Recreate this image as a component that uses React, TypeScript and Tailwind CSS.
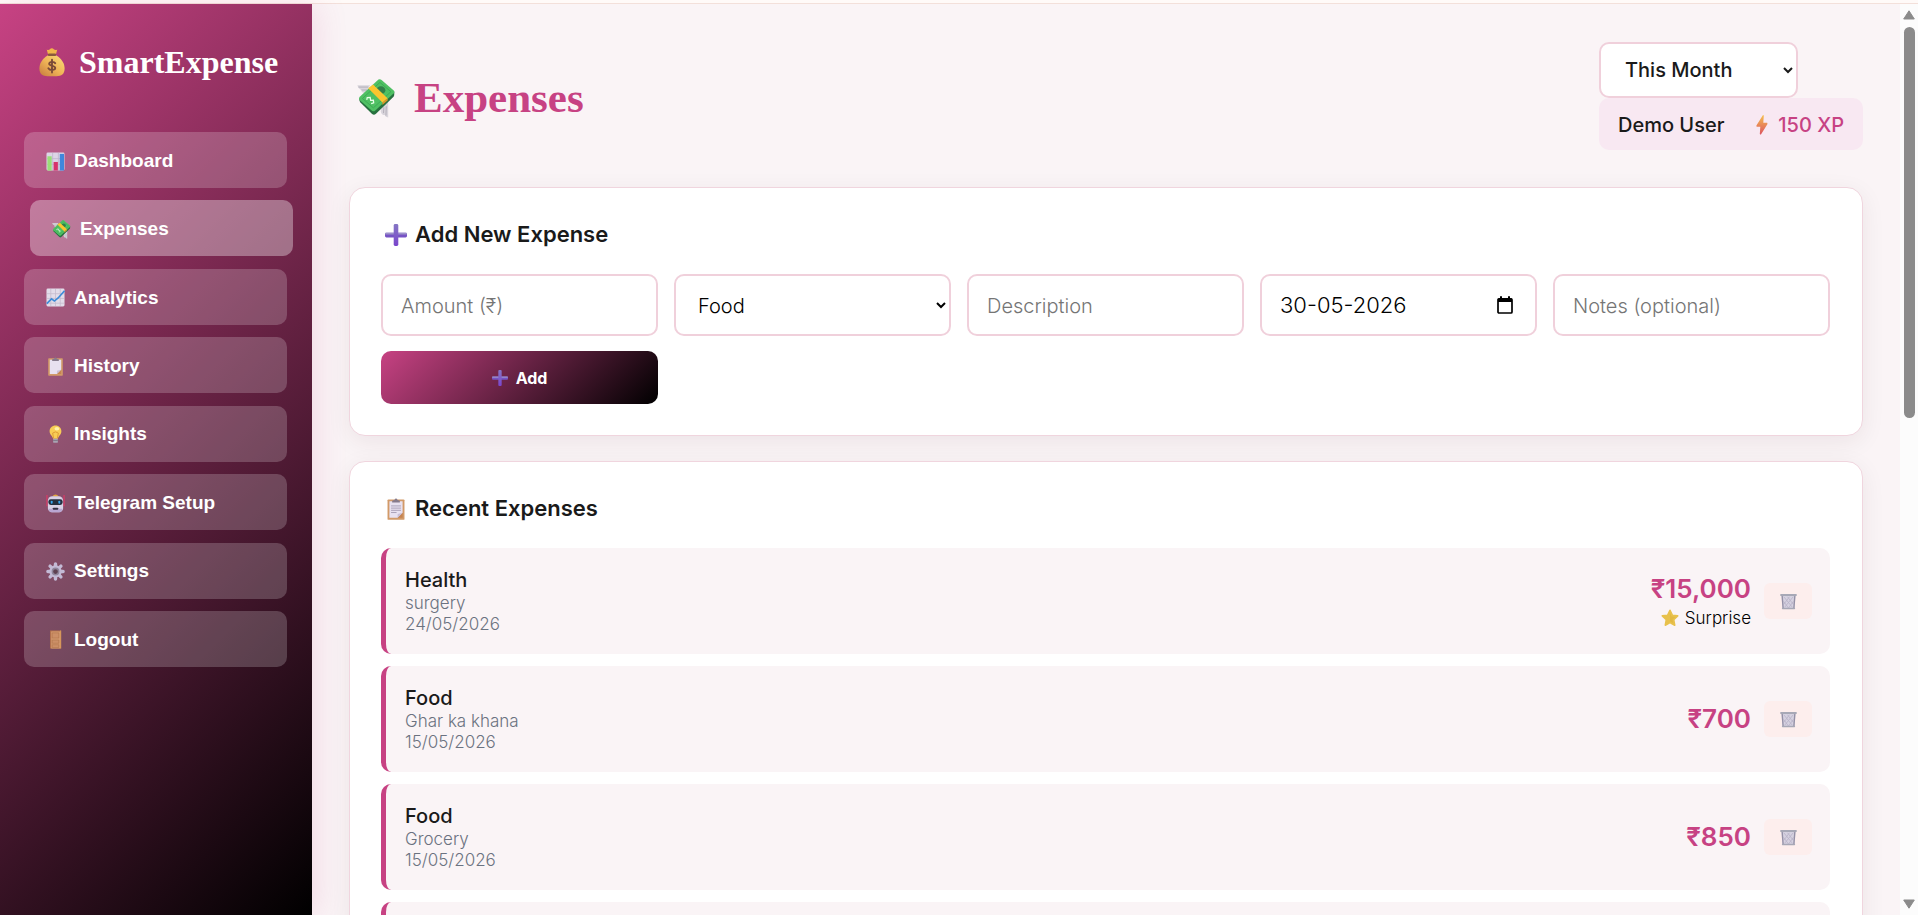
import type { ReactNode } from 'react';
import { clsx } from 'clsx';

interface IconProps {
  className?: string;
}

function MoneyBagIcon({ className }: IconProps) {
  return (
    <svg viewBox="0 0 32 36" className={className} aria-hidden="true">
      <defs>
        <linearGradient id="bag" x1="1" y1="0" x2="0" y2="1">
          <stop offset="0" stopColor="#fbe07a" />
          <stop offset=".5" stopColor="#f0b557" />
          <stop offset="1" stopColor="#c57a3e" />
        </linearGradient>
      </defs>
      <path d="M11 8 9.500 2.500q2 1.300 3.500.2Q16-.8 18.500 2.700q2 1 4-.2L21 8Z" fill="#f2b54a" />
      <path d="M10.500 10C4 14 .5 20 .5 26c0 7 4 9.500 10 9.500h11c6 0 10-2.500 10-9.500 0-6-3.500-12-10-16Z" fill="url(#bag)" />
      <rect x="11" y="7.500" width="10" height="3" rx="1.200" fill="#8a5a3c" />
      <path d="M20 19.500c-1-2-7-2.500-7.500.5-.4 3 7.500 2 7.500 5.500 0 3-7 3-8.500.2M16 15v16" fill="none" stroke="#7a4b38" strokeWidth="2.300" strokeLinecap="round" />
    </svg>
  );
}

function FlyingMoneyIcon({ className }: IconProps) {
  return (
    <svg viewBox="0 0 40 40" className={className} aria-hidden="true">
      <path d="M.4 6.500h13L9 14.500q-4 0-4.500-2.500l.8-.3Q1 10 .4 6.500Z" fill="#d9d5dc" />
      <path d="M1.500 8.300h10M4.500 11.300h6" stroke="#aaa5b0" strokeWidth=".8" />
      <path d="M26 25l6-3v17.500q-3-.3-3.500-2.500Q25 37 24.300 33Z" fill="#d9d5dc" />
      <path d="m30 28-.3 9.500M27.500 29l-.3 6" stroke="#aaa5b0" strokeWidth=".8" />
      <path d="M2.300 20q0 3 1.200 4.200l12 11.800q2 1.300 4-.3l18-17.500q1-1.500.8-5Z" fill="#27703f" />
      <path d="M22 .6q1.500-1 3.200.3l12.500 10.800q1.300 1.400 0 3L18.500 32.500q-1.500 1.200-3.200 0L2.600 21.500q-1-1.500 0-3Z" fill="#4fc063" />
      <path d="M23.500 3.500 34.800 13 16.800 29.600 5.600 20Z" fill="none" stroke="#3cab54" strokeWidth="1" />
      <ellipse cx="24.500" cy="11.500" rx="4.600" ry="4" fill="#31804a" />
      <path d="m11.500 9.500 5-3.800 14.800 14-5.200 4.500Z" fill="#fbc52f" />
      <path d="m31.300 19.700-5.200 4.500v2.500l5.500-5Z" fill="#d99527" />
      <path d="m10 21.300.5-2.300 3-.2.500 3.200 2.800-.2.300 2.700-2.600.8" fill="none" stroke="#e9ffe9" strokeWidth="1.300" />
    </svg>
  );
}

function BarChartIcon({ className }: IconProps) {
  return (
    <svg viewBox="0 0 20 20" className={className} aria-hidden="true">
      <rect x=".5" y=".5" width="19" height="19" rx="1.500" fill="#dcd5e6" />
      <path d="M7 1v18M13 1v18M1 7h18M1 13h18" stroke="#bdb3cc" strokeWidth=".8" />
      <rect x="1.500" y="4.500" width="4.500" height="15" fill="#9ade78" />
      <rect x="8" y="10.500" width="4.500" height="9" fill="#d6336c" />
      <rect x="14.500" y="2" width="4.500" height="17.500" fill="#3f87dc" />
    </svg>
  );
}

function LineChartIcon({ className }: IconProps) {
  return (
    <svg viewBox="0 0 20 20" className={className} aria-hidden="true">
      <rect x=".5" y=".5" width="19" height="19" rx="1.500" fill="#e2dce9" />
      <path d="M5 1v18M10 1v18M15 1v18M1 6h18M1 11h18M1 16h18" stroke="#c3bacd" strokeWidth=".8" />
      <path d="m.8 16.500 5-5 3 2.200 4-3.200L19.500 3" fill="none" stroke="#3d8bd8" strokeWidth="1.700" />
    </svg>
  );
}

function ClipboardIcon({ className, lined }: IconProps & { lined?: boolean }) {
  return (
    <svg viewBox="0 0 20 20" className={className} aria-hidden="true">
      <rect x="2.300" y="1.300" width="15.400" height="18.500" rx=".8" fill="#d29a68" />
      <path d="M4 3h12v10.500L11.500 18H4Z" fill="#e8e1f0" />
      <path d="M16 13.500V18h-4.500Z" fill="#c48452" />
      <path d="M11.500 18v-3.500l4.500-1Z" fill="#c9bfd6" />
      {lined && <path d="M5.500 7.200h9M5.500 9.200h9M5.500 11.200h9M5.500 13.200h5" stroke="#aaa1b8" strokeWidth=".9" />}
      <path d="M6.500 4.200V2.400l2-.6q1.500-2.700 3 0l2 .6v1.800Z" fill="#867b8c" />
    </svg>
  );
}

function BulbIcon({ className }: IconProps) {
  return (
    <svg viewBox="0 0 20 20" className={className} aria-hidden="true">
      <path d="M10 .5c-3.700 0-6.200 2.700-6.200 6 0 4 3.200 4.800 3.700 8h5c.5-3.200 3.700-4 3.700-8 0-3.300-2.500-6-6.200-6Z" fill="#f8cd55" />
      <path d="M8 14 7 8.500q3-2.500 6 0L12 14" fill="none" stroke="#dc9c35" strokeWidth="1" />
      <ellipse cx="11.500" cy="4" rx="2.500" ry="1.800" fill="#fff1a8" />
      <rect x="7.500" y="14.500" width="5" height="4.300" rx="1" fill="#a9a3b2" />
      <path d="M7.500 16.300h5" stroke="#77707f" strokeWidth=".8" />
    </svg>
  );
}

function RobotIcon({ className }: IconProps) {
  return (
    <svg viewBox="0 0 20 20" className={className} aria-hidden="true">
      <path d="M1 1v12M19 1v12" stroke="#d83b68" strokeWidth="1.300" />
      <path d="M6.500 2.500q3.500-4 7 0Z" fill="#e5a83c" />
      <rect x="2" y="2.300" width="16" height="17" rx="4.500" fill="#d9d2e6" />
      <path d="M2.500 15.500Q3 19.300 7 19.300h6q4 0 4.500-3.800Z" fill="#b9a7d3" />
      <rect x="2.500" y="5.500" width="15" height="6" rx="2.500" fill="#25303f" />
      <rect x="5" y="7" width="2" height="3.300" rx="1" fill="#38a8f0" />
      <rect x="13" y="7" width="2" height="3.300" rx="1" fill="#38a8f0" />
      <rect x="7.300" y="14.500" width="5.400" height="2" rx=".5" fill="#343144" />
    </svg>
  );
}

function GearIcon({ className }: IconProps) {
  return (
    <svg viewBox="0 0 20 20" className={className} aria-hidden="true">
      <path d="M10 2v16M2 10h16M4.300 4.300l11.400 11.400M15.700 4.300 4.300 15.700" stroke="#c3bad5" strokeWidth="3.600" strokeLinecap="round" />
      <circle cx="10" cy="10" r="6.500" fill="#c3bad5" />
      <circle cx="10" cy="10" r="3.300" fill="#5e4152" stroke="#8f869c" strokeWidth="1.600" />
    </svg>
  );
}

function DoorIcon({ className }: IconProps) {
  return (
    <svg viewBox="0 0 20 20" className={className} aria-hidden="true">
      <rect x="4.300" y=".5" width="11.400" height="19" fill="#b5734c" />
      <rect x="5.500" y="1.500" width="9.500" height="18" fill="#d39a70" />
      <path d="M6.500 3h7v5.500h-7ZM6.500 10.500h7v3.500h-7ZM6.500 15.500h7v3h-7Z" fill="#cc8f67" stroke="#b07148" strokeWidth=".6" />
      <path d="M15.500.5v19" stroke="#eaa95e" strokeWidth=".8" />
    </svg>
  );
}

function PlusIcon({ className }: IconProps) {
  return (
    <svg viewBox="0 0 22 22" className={className} aria-hidden="true">
      <defs>
        <linearGradient id="plus" x1="0" y1="0" x2="0" y2="1">
          <stop offset="0" stopColor="#8576c4" />
          <stop offset="1" stopColor="#7a45cc" />
        </linearGradient>
      </defs>
      <rect x="0" y="8.800" width="22" height="4.600" rx="1.400" fill="#7653c5" />
      <rect x="0" y="8.800" width="22" height="1.700" rx=".8" fill="#9d93c9" />
      <rect x="8.700" y="0" width="4.600" height="22" rx="1.400" fill="url(#plus)" />
    </svg>
  );
}

function BoltIcon({ className }: IconProps) {
  return (
    <svg viewBox="0 0 12 20" className={className} aria-hidden="true">
      <defs>
        <linearGradient id="bolt" x1="0" y1="0" x2="0" y2="1">
          <stop offset="0" stopColor="#f5c04e" />
          <stop offset="1" stopColor="#dc5360" />
        </linearGradient>
      </defs>
      <path d="M7 0 .4 10.500l.2 1.200h3.700L3.800 19l1 .8L11.500 9l-.3-1.200H7.300L7.800.6Z" fill="url(#bolt)" />
    </svg>
  );
}

function StarIcon({ className }: IconProps) {
  return (
    <svg viewBox="0 0 18 18" className={className} aria-hidden="true">
      <path
        d="m9 1.300 2.300 4.900 5.400.7-4 3.800 1 5.500L9 13.600l-4.700 2.600 1-5.500-4-3.800 5.400-.7Z"
        fill="#e8c14c"
        stroke="#e8c14c"
        strokeWidth="1.600"
        strokeLinejoin="round"
      />
      <path d="m9 4 1.500 3.500 3.800.5-2.800 2.500.6 3.500L9 12.200" fill="#e2b842" />
    </svg>
  );
}

function TrashIcon({ className }: IconProps) {
  return (
    <svg viewBox="0 0 18 18" className={className} aria-hidden="true">
      <path d="M1.500 2.500h15l-1 14h-13Z" fill="#d5d1e0" />
      <path d="m4 4 9 11M8 4l6 8M4 9l5 7M14 4 5 15M10 4l-6 8M14 9l-5 7" stroke="#b9b4c9" strokeWidth=".9" />
      <path d="m2.300 3 1 13M15.700 3l-1 13" stroke="#9490a6" strokeWidth="1.400" />
      <rect x=".3" y="1" width="17.400" height="2.300" rx=".7" fill="#a7a8b6" />
      <rect x="2" y="15.500" width="14" height="1.700" rx=".7" fill="#a7a8b6" />
    </svg>
  );
}

function CalendarIcon({ className }: IconProps) {
  return (
    <svg viewBox="0 0 16 18" className={className} aria-hidden="true">
      <rect x="1" y="2.800" width="14" height="14.200" rx="1" fill="none" stroke="#000" strokeWidth="1.700" />
      <path d="M1 2.500h14V6H1ZM3 .3h2V3H3ZM11 .3h2V3h-2Z" />
    </svg>
  );
}

const navItems = [
  { label: 'Dashboard', Icon: BarChartIcon },
  { label: 'Expenses', Icon: FlyingMoneyIcon, active: true },
  { label: 'Analytics', Icon: LineChartIcon },
  { label: 'History', Icon: ClipboardIcon },
  { label: 'Insights', Icon: BulbIcon },
  { label: 'Telegram Setup', Icon: RobotIcon },
  { label: 'Settings', Icon: GearIcon },
  { label: 'Logout', Icon: DoorIcon },
];

interface Expense {
  id: number;
  category: string;
  description: string;
  date: string;
  amount: string;
  surprise?: boolean;
}

const expenses: Expense[] = [
  { id: 1, category: 'Health', description: 'surgery', date: '24/05/2026', amount: '₹15,000', surprise: true },
  { id: 2, category: 'Food', description: 'Ghar ka khana', date: '15/05/2026', amount: '₹700' },
  { id: 3, category: 'Food', description: 'Grocery', date: '15/05/2026', amount: '₹850' },
];

const boxClass = 'h-[62px] w-full min-w-0 rounded-[10px] border-2 border-[#f0d0db] bg-white px-[18px] font-light text-black';
const inputClass = clsx(boxClass, 'pt-0.5 text-xl placeholder:text-[#757575]');

function Sidebar() {
  return (
    <aside className="relative z-10 w-[312px] shrink-0 bg-[linear-gradient(135deg,#c74283,#000)] px-6 pt-9 shadow-[4px_0_30px_rgba(199,66,131,0.15)]">
      <div className="flex h-11 items-center gap-3.5 pl-[15px] text-white">
        <MoneyBagIcon className="h-[30px] w-[26px] shrink-0" />
        <span className="font-['Liberation_Serif',serif] text-[32px] font-bold">SmartExpense</span>
      </div>
      <nav className="mt-12 flex h-[535px] flex-col justify-between font-['Liberation_Sans',sans-serif]">
        {navItems.map(({ label, Icon, active }) => (
          <button
            key={label}
            type="button"
            className={clsx(
              'flex h-14 w-[263px] items-center gap-[9px] rounded-[10px] px-[22px] pt-0.5 text-left text-[19px] font-bold text-white',
              active ? 'translate-x-1.5 bg-white/35' : 'bg-white/20',
            )}
          >
            <Icon className="size-[19px] shrink-0" />
            {label}
          </button>
        ))}
      </nav>
    </aside>
  );
}

function Card({ icon, title, children }: { icon: ReactNode; title: string; children: ReactNode }) {
  return (
    <section className="rounded-2xl border border-[#f0d5de] bg-white py-[31px] pl-[31px] pr-8 shadow-[0_6px_24px_rgba(60,10,35,0.07)]">
      <h2 className="mb-6 flex h-[31px] items-center gap-2 pl-1 text-[22px] font-semibold">
        {icon}
        {title}
      </h2>
      {children}
    </section>
  );
}

const rowClass = 'rounded-[10px] border-l-[5px] border-[#c74283] bg-[#faf4f6]';

function ExpenseRow({ expense }: { expense: Expense }) {
  return (
    <li className={clsx(rowClass, 'flex items-center justify-between py-5 pl-[19px] pr-[18px]')}>
      <div>
        <h3 className="text-xl/[25px] font-medium">{expense.category}</h3>
        <p className="text-[17px]/[21px] font-light text-[#6b7280]">{expense.description}</p>
        <p className="text-[17px]/5 font-light text-[#6b7280]">{expense.date}</p>
      </div>
      <div className="flex items-center gap-[13px]">
        <div className="text-right">
          <div className="text-[26px]/8 font-semibold text-[#c74283]">{expense.amount}</div>
          {expense.surprise && (
            <div className="flex items-center justify-end gap-1.5 pt-0.5 text-[17px]/[22px] font-light text-black">
              <StarIcon className="size-[18px]" />
              Surprise
            </div>
          )}
        </div>
        <button
          type="button"
          aria-label="Delete expense"
          className="flex h-9 w-12 items-center justify-center rounded-md bg-[#fdeeed]"
        >
          <TrashIcon className="size-[17px]" />
        </button>
      </div>
    </li>
  );
}

function Scrollbar() {
  return (
    <div className="flex w-[18px] shrink-0 flex-col items-center bg-[#fcfcfc] py-1.5" aria-hidden="true">
      <svg viewBox="0 0 12 10" className="h-2.5 w-3">
        <path d="M6 .8 11.300 9H.7Z" fill="#8b8b8b" stroke="#8b8b8b" strokeLinejoin="round" />
      </svg>
      <div className="mt-[7px] h-[391px] w-[11px] rounded-full bg-[#8b8b8b]" />
      <svg viewBox="0 0 12 10" className="mt-auto h-2.5 w-3">
        <path d="M6 9.200 11.300 1H.7Z" fill="#8b8b8b" stroke="#8b8b8b" strokeLinejoin="round" />
      </svg>
    </div>
  );
}

export default function App() {
  return (
    <div className="flex h-screen flex-col overflow-hidden bg-[#faf4f6] font-['Inter',sans-serif] text-[#1a1a1a]">
      <div className="h-1 shrink-0 border-b border-[#f3e0da] bg-[#fffaf8]" />
      <div className="flex min-h-0 flex-1">
        <Sidebar />
        <main className="min-w-0 flex-1 overflow-hidden px-[37px] pt-[38px]">
          <header className="mb-[37px] flex items-center justify-between">
            <h1 className="flex items-center gap-[18px] pl-2 pt-1 font-['Liberation_Serif',serif] text-[43px]/[52px] font-bold text-[#c74283]">
              <FlyingMoneyIcon className="size-[39px] shrink-0" />
              Expenses
            </h1>
            <div>
              <select
                aria-label="Period"
                className="block h-14 w-[199px] rounded-[10px] border-2 border-[#f0d0db] bg-white px-5 text-xl font-medium text-[#1a1a1a]"
              >
                <option>This Month</option>
              </select>
              <div className="flex h-[52px] w-[264px] items-center justify-between rounded-[10px] bg-[#f8e8f2] px-[19px] pt-0.5 text-xl font-medium">
                <span>Demo User</span>
                <span className="flex items-center gap-2.5 text-[#c74283]">
                  <BoltIcon className="h-5 w-3" />
                  150 XP
                </span>
              </div>
            </div>
          </header>

          <div className="flex flex-col gap-[25px]">
            <Card icon={<PlusIcon className="size-[22px]" />} title="Add New Expense">
              <form className="grid grid-cols-5 gap-x-4 gap-y-[15px]">
                <input className={inputClass} placeholder="Amount (₹)" aria-label="Amount" />
                <select className={clsx(boxClass, 'pt-0.5 text-xl')} aria-label="Category">
                  <option>Food</option>
                </select>
                <input className={inputClass} placeholder="Description" aria-label="Description" />
                <div className="relative">
                  <input className={clsx(boxClass, 'text-[22px]')} defaultValue="30-05-2026" aria-label="Date" />
                  <button type="button" aria-label="Open calendar" className="absolute right-6 top-[22px]">
                    <CalendarIcon className="h-[18px] w-4" />
                  </button>
                </div>
                <input className={inputClass} placeholder="Notes (optional)" aria-label="Notes" />
                <button
                  type="button"
                  className="flex h-[53px] items-center justify-center gap-2 rounded-[10px] bg-[linear-gradient(135deg,#c74283,#000)] text-base font-bold text-white"
                >
                  <PlusIcon className="size-4" />
                  Add
                </button>
              </form>
            </Card>

            <Card icon={<ClipboardIcon lined className="size-[22px]" />} title="Recent Expenses">
              <ul className="flex flex-col gap-3">
                {expenses.map((expense) => (
                  <ExpenseRow key={expense.id} expense={expense} />
                ))}
                <li className={clsx(rowClass, 'h-[106px]')} aria-hidden="true" />
              </ul>
            </Card>
          </div>
        </main>
        <Scrollbar />
      </div>
    </div>
  );
}
